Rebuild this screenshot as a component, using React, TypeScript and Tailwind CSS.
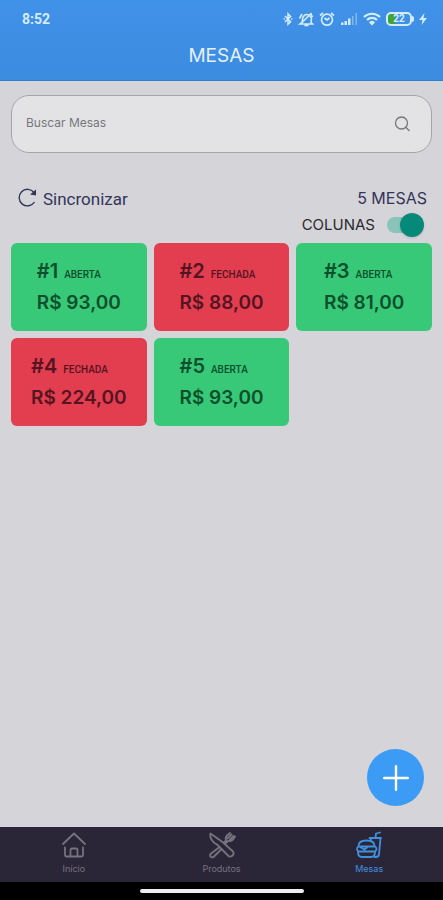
import { useState } from "react";
import type { ReactNode } from "react";

type Table = {
    id: number;
    status: "ABERTA" | "FECHADA";
    total: number;
};

const tables: Table[] = [
    { id: 1, status: "ABERTA", total: 93 },
    { id: 2, status: "FECHADA", total: 88 },
    { id: 3, status: "ABERTA", total: 81 },
    { id: 4, status: "FECHADA", total: 224 },
    { id: 5, status: "ABERTA", total: 93 },
];

function formatPrice(value: number) {
    return "R$ " + value.toFixed(2).replace(".", ",");
}

// Phone status bar: clock and system icons
function StatusBar() {
    return (
        <div className="flex h-[38px] items-center justify-between pr-4 pl-[22px] text-[#d3ecfb]">
            <span className="font-['Roboto',sans-serif] text-sm font-bold">8:52</span>
            <div className="flex items-center gap-[5px]">
                <svg viewBox="0 0 10 16" className="h-[14px] w-[10px]" fill="none" stroke="currentColor" strokeWidth="1.7">
                    <path d="M1.500 4.500 8 11l-3 3V2l3 3-6.500 6.500" />
                    <path d="M0 8h1.500M8.500 8H10" />
                </svg>
                <svg viewBox="0 0 16 16" className="size-4" fill="none" stroke="currentColor" strokeWidth="1.6">
                    <path d="M4 11.500 5 6q3-4.500 7-1l1.500 2-.5 4.500 1.500 1.500H2zM6.500 14.500h4M2 13.500 13.500 2M1.500 7.500 4 3M14.500 6l-1.500-3" />
                </svg>
                <svg viewBox="0 0 16 16" className="size-4" fill="none" stroke="currentColor" strokeWidth="1.7">
                    <circle cx="8" cy="8.700" r="5.500" />
                    <path d="M1 4.500 4 2M15 4.500 12 2M5.500 7 8 9l2.500-2" />
                </svg>
                <svg viewBox="0 0 18 14" className="h-[14px] w-[18px]" fill="currentColor">
                    <path d="M1 10.500h2.500V13H1zM4.500 9H7v4H4.500zM8 6.500h2.500V13H8z" />
                    <path d="M12 4h1.500v9H12zM15.500 1H17v12h-1.500z" opacity=".45" />
                </svg>
                <svg viewBox="0 0 18 14" className="h-[14px] w-[18px]" fill="none" stroke="currentColor" strokeWidth="2.2">
                    <path d="M1 5a11.500 11.500 0 0 1 16 0M4 8a7 7 0 0 1 10 0" />
                    <path d="M6 10.500a3.500 3.500 0 0 1 6 0l-3 3z" fill="currentColor" stroke="none" />
                </svg>
                <div className="flex items-center">
                    <div className="flex h-[14px] w-[26px] items-center justify-center rounded-[5px] border-2 bg-linear-to-r from-[#3fa535] from-30% to-transparent to-30% font-['Roboto',sans-serif] text-[10px] leading-none font-bold">
                        22
                    </div>
                    <span className="h-1.5 w-0.5 rounded-r bg-current" />
                </div>
                <svg viewBox="0 0 8 12" className="h-3 w-2" fill="currentColor">
                    <path d="M5.500 0 0 7h3.500L2.500 12 8 5H4.500z" />
                </svg>
            </div>
        </div>
    );
}

function TableCard({ table }: { table: Table }) {
    const open = table.status === "ABERTA";
    return (
        <button
            type="button"
            className={`flex h-[88px] items-center justify-center rounded-md text-left ${
                open ? "bg-[#37c978] text-[#0e4f2c]" : "bg-[#e23e50] text-[#551420]"
            }`}
        >
            <span className="flex flex-col">
                <span className="flex items-baseline gap-1.5">
                    <span className="text-xl leading-8 font-semibold">#{table.id}</span>
                    <span className="font-['Roboto',sans-serif] text-[10px] font-medium">{table.status}</span>
                </span>
                <span className="text-[19px] leading-8 font-semibold whitespace-nowrap">{formatPrice(table.total)}</span>
            </span>
        </button>
    );
}

function NavItem({ label, active, children }: { label: string; active?: boolean; children: ReactNode }) {
    return (
        <a
            href={"#" + label}
            className={`flex flex-1 flex-col items-center gap-1 pt-1 ${active ? "text-[#3f91e0]" : "text-[#77727f]"}`}
        >
            <svg
                viewBox="0 0 28 28"
                className="size-7"
                fill="none"
                stroke="currentColor"
                strokeWidth="1.8"
                strokeLinecap="round"
                strokeLinejoin="round"
            >
                {children}
            </svg>
            <span className="text-[9px] leading-3">{label}</span>
        </a>
    );
}

export default function App() {
    const [search, setSearch] = useState("");
    const [columns, setColumns] = useState(true);

    const visible = tables.filter((t) => String(t.id).includes(search.trim()));

    return (
        <div className="flex min-h-screen flex-col bg-[#d4d4d9] font-['Inter',sans-serif]">
            <header className="h-[81px] border-b border-[#2f7fd0] bg-linear-to-b from-[#4091e8] to-[#3c8ce0]">
                <StatusBar />
                <h1 className="text-center text-[19px] leading-9 text-[#e4f0fa]">MESAS</h1>
            </header>

            <main className="flex grow flex-col px-[11px] pt-[14px]">
                <div className="flex h-[58px] items-center rounded-[18px] border border-[#a5a5a9] bg-[#e3e3e6] pr-[21px] pl-[14px]">
                    <input
                        type="search"
                        aria-label="Buscar Mesas"
                        placeholder="Buscar Mesas"
                        value={search}
                        onChange={(e) => setSearch(e.target.value)}
                        className="min-w-0 grow bg-transparent pb-0.5 text-xs text-[#444] outline-none placeholder:text-[#77777b]"
                    />
                    <svg viewBox="0 0 16 16" className="size-4 text-[#77777b]" fill="none" stroke="currentColor" strokeWidth="1.3">
                        <circle cx="7.500" cy="7" r="6" />
                        <path d="m12 11.500 3.500 3.500" />
                    </svg>
                </div>

                <div className="mt-8 flex items-start justify-between pr-[5px] pl-[6px] text-[#33345a]">
                    <button type="button" className="flex items-center gap-1 font-['Roboto',sans-serif] text-[17px] leading-7">
                        <svg viewBox="0 0 22 22" className="size-[22px]" fill="none" stroke="currentColor" strokeWidth="1.4">
                            <path d="M17.500 14A8.300 8.300 0 1 1 17 4.500" />
                            <path d="M19 1.500v6l-6-1z" fill="currentColor" stroke="none" />
                        </svg>
                        Sincronizar
                    </button>
                    <span className="text-base leading-[26px]">5 MESAS</span>
                </div>

                <label className="flex items-center justify-end gap-3 pr-2 text-[15px] leading-6 text-[#2a2a2e]">
                    COLUNAS
                    <span className="relative flex h-6 w-[37px] items-center">
                        <input
                            type="checkbox"
                            role="switch"
                            checked={columns}
                            onChange={(e) => setColumns(e.target.checked)}
                            className="peer h-4 w-8 appearance-none rounded-full bg-[#b0b0b4] checked:bg-[#89c3b9]"
                        />
                        <span className="pointer-events-none absolute left-0 size-6 rounded-full bg-[#f2f2f2] shadow-sm peer-checked:left-[13px] peer-checked:bg-[#07897a]" />
                    </span>
                </label>

                <section className={`mt-1.5 grid gap-[7px] ${columns ? "grid-cols-3" : "grid-cols-1"}`}>
                    {visible.map((table) => (
                        <TableCard key={table.id} table={table} />
                    ))}
                </section>

                <button
                    type="button"
                    aria-label="Adicionar mesa"
                    className="mt-auto mr-2 mb-[21px] flex size-[57px] items-center justify-center self-end rounded-full bg-[#3c9cf5] text-white"
                >
                    <svg viewBox="0 0 26 26" className="size-[26px]" stroke="currentColor" strokeWidth="2.4" strokeLinecap="round">
                        <path d="M13 1.200v23.600M1.200 13h23.600" />
                    </svg>
                </button>
            </main>

            <footer className="bg-black">
                <nav className="flex h-[55px] bg-[#2b2637]">
                    <NavItem label="Início">
                        <path d="M3 13 14 2.500 25 13" />
                        <path d="M5 16.500v7.500q0 1.500 1.500 1.500h15q1.500 0 1.500-1.500v-7.500M10.500 25v-6q0-1.500 1.500-1.500h4q1.500 0 1.500 1.500v6" />
                    </NavItem>
                    <NavItem label="Produtos">
                        <path d="M2.500 2.500c-1 4 1 7 4 9.500l2.500 1.500L20.500 25q2 1.500 4-.5t.5-4L14.500 11z" />
                        <path d="m11.500 16-9 7q-1 2 .5 3t3-.5l7.500-7.500M17 13l3-3q3 .5 5-1.500l2-3M16 11.500l2-2q-1-3 1-5l3-2.500M19.500 7.500l4-4M22 8.500l3.500-3.500" />
                    </NavItem>
                    <NavItem label="Mesas" active>
                        <path d="M14.500 7H26M20.500 7l.5-4.500 4-1M15.500 7l.5 2M25.500 7 24 23.500q-.5 2.500-3 2.500h-1.500" />
                        <path d="M3.500 15c0-4 3-5.500 8-5.500s8 1.500 8 5.500M3.500 15.500h16.500q1.500 1 1.500 2.500t-1.500 2.500H3.500Q2 19.500 2 18t1.500-2.500zM5 16l4.500 2.500 3-2.500M3 21c0 3.500 1.500 5 4 5h9c2.500 0 4-1.500 4-5" />
                    </NavItem>
                </nav>
                <div className="flex h-[18px] items-center justify-center">
                    <span className="h-1 w-[164px] rounded-full bg-[#eee]" />
                </div>
            </footer>
        </div>
    );
}
